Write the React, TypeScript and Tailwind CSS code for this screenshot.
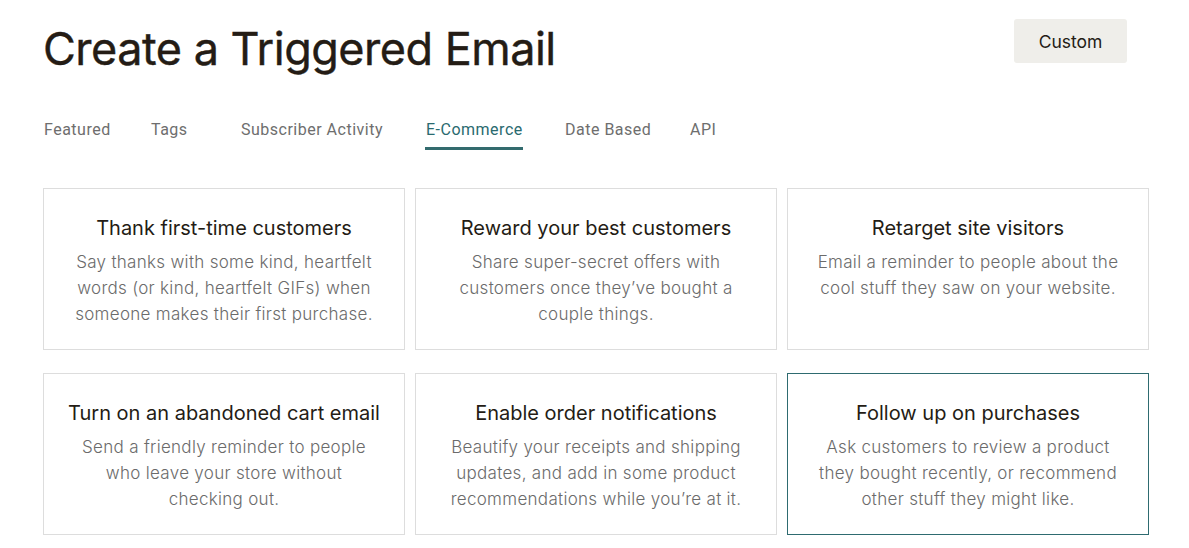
import React from 'react';

type Card = {
  title: string;
  lines: string[];
  active?: boolean;
};

const tabs = [
  { label: 'Featured', width: 'w-[107px]' },
  { label: 'Tags', width: 'w-[90px]' },
  { label: 'Subscriber Activity', width: 'w-[185px]' },
  { label: 'E-Commerce', width: 'w-[139px]', active: true },
  { label: 'Date Based', width: 'w-[125px]' },
  { label: 'API', width: 'w-[40px]' },
];

const cards: Card[] = [
  {
    title: 'Thank first-time customers',
    lines: ['Say thanks with some kind, heartfelt', 'words (or kind, heartfelt GIFs) when', 'someone makes their first purchase.'],
  },
  {
    title: 'Reward your best customers',
    lines: ['Share super-secret offers with', 'customers once they\u2019ve bought a', 'couple things.'],
  },
  {
    title: 'Retarget site visitors',
    lines: ['Email a reminder to people about the', 'cool stuff they saw on your website.'],
  },
  {
    title: 'Turn on an abandoned cart email',
    lines: ['Send a friendly reminder to people', 'who leave your store without', 'checking out.'],
  },
  {
    title: 'Enable order notifications',
    lines: ['Beautify your receipts and shipping', 'updates, and add in some product', 'recommendations while you\u2019re at it.'],
  },
  {
    title: 'Follow up on purchases',
    lines: ['Ask customers to review a product', 'they bought recently, or recommend', 'other stuff they might like.'],
    active: true,
  },
];

const App: React.FC = () => {
  return (
    <div className="min-h-screen bg-white font-['Inter',sans-serif] text-[#241c15]">
      <div className="w-[1106px] ml-[43px] pt-[19px]">
        <div className="flex items-start justify-between">
          <h1 className="mt-[5px] text-[45px] leading-[50px] font-normal tracking-[-0.5px] text-[#241c15] [-webkit-text-stroke:0.4px_#241c15]">
            Create a Triggered Email
          </h1>
          <button
            type="button"
            className="mr-[22px] h-[44px] w-[113px] rounded-[3px] bg-[#efeeea] pt-[2px] text-[17.5px] text-[#241c15]"
          >
            Custom
          </button>
        </div>

        <nav className="mt-[46px] flex items-start font-['Roboto',sans-serif] text-[16px]">
          {tabs.map((tab) => (
            <div key={tab.label} className={`${tab.width} flex`}>
              <div className="flex flex-col">
                <span
                  className={`pl-[1px] leading-[20px] tracking-[0.5px] ${
                    tab.active ? 'text-[#2a6a6f]' : 'text-[#6e6e6e]'
                  }`}
                >
                  {tab.label}
                </span>
                {tab.active && <span className="mt-[7px] h-[3px] bg-[#336b6e]" />}
              </div>
            </div>
          ))}
        </nav>

        <div className="mt-[38px] grid grid-cols-3 gap-x-[10px] gap-y-[23px]">
          {cards.map((card) => (
            <div
              key={card.title}
              className={`flex h-[162px] flex-col items-center border pt-[26px] text-center ${
                card.active ? 'border-[#2e6b70]' : 'border-[#dddddd]'
              }`}
            >
              <h2 className="text-[20px] leading-[26px] text-[#241c15]">{card.title}</h2>
              <p className="mt-[8px] text-[17px] leading-[26px] font-light tracking-[0.3px] text-[#6b6b6b]">
                {card.lines.map((line) => (
                  <span key={line} className="block">
                    {line}
                  </span>
                ))}
              </p>
            </div>
          ))}
        </div>
      </div>
    </div>
  );
};

export default App;
